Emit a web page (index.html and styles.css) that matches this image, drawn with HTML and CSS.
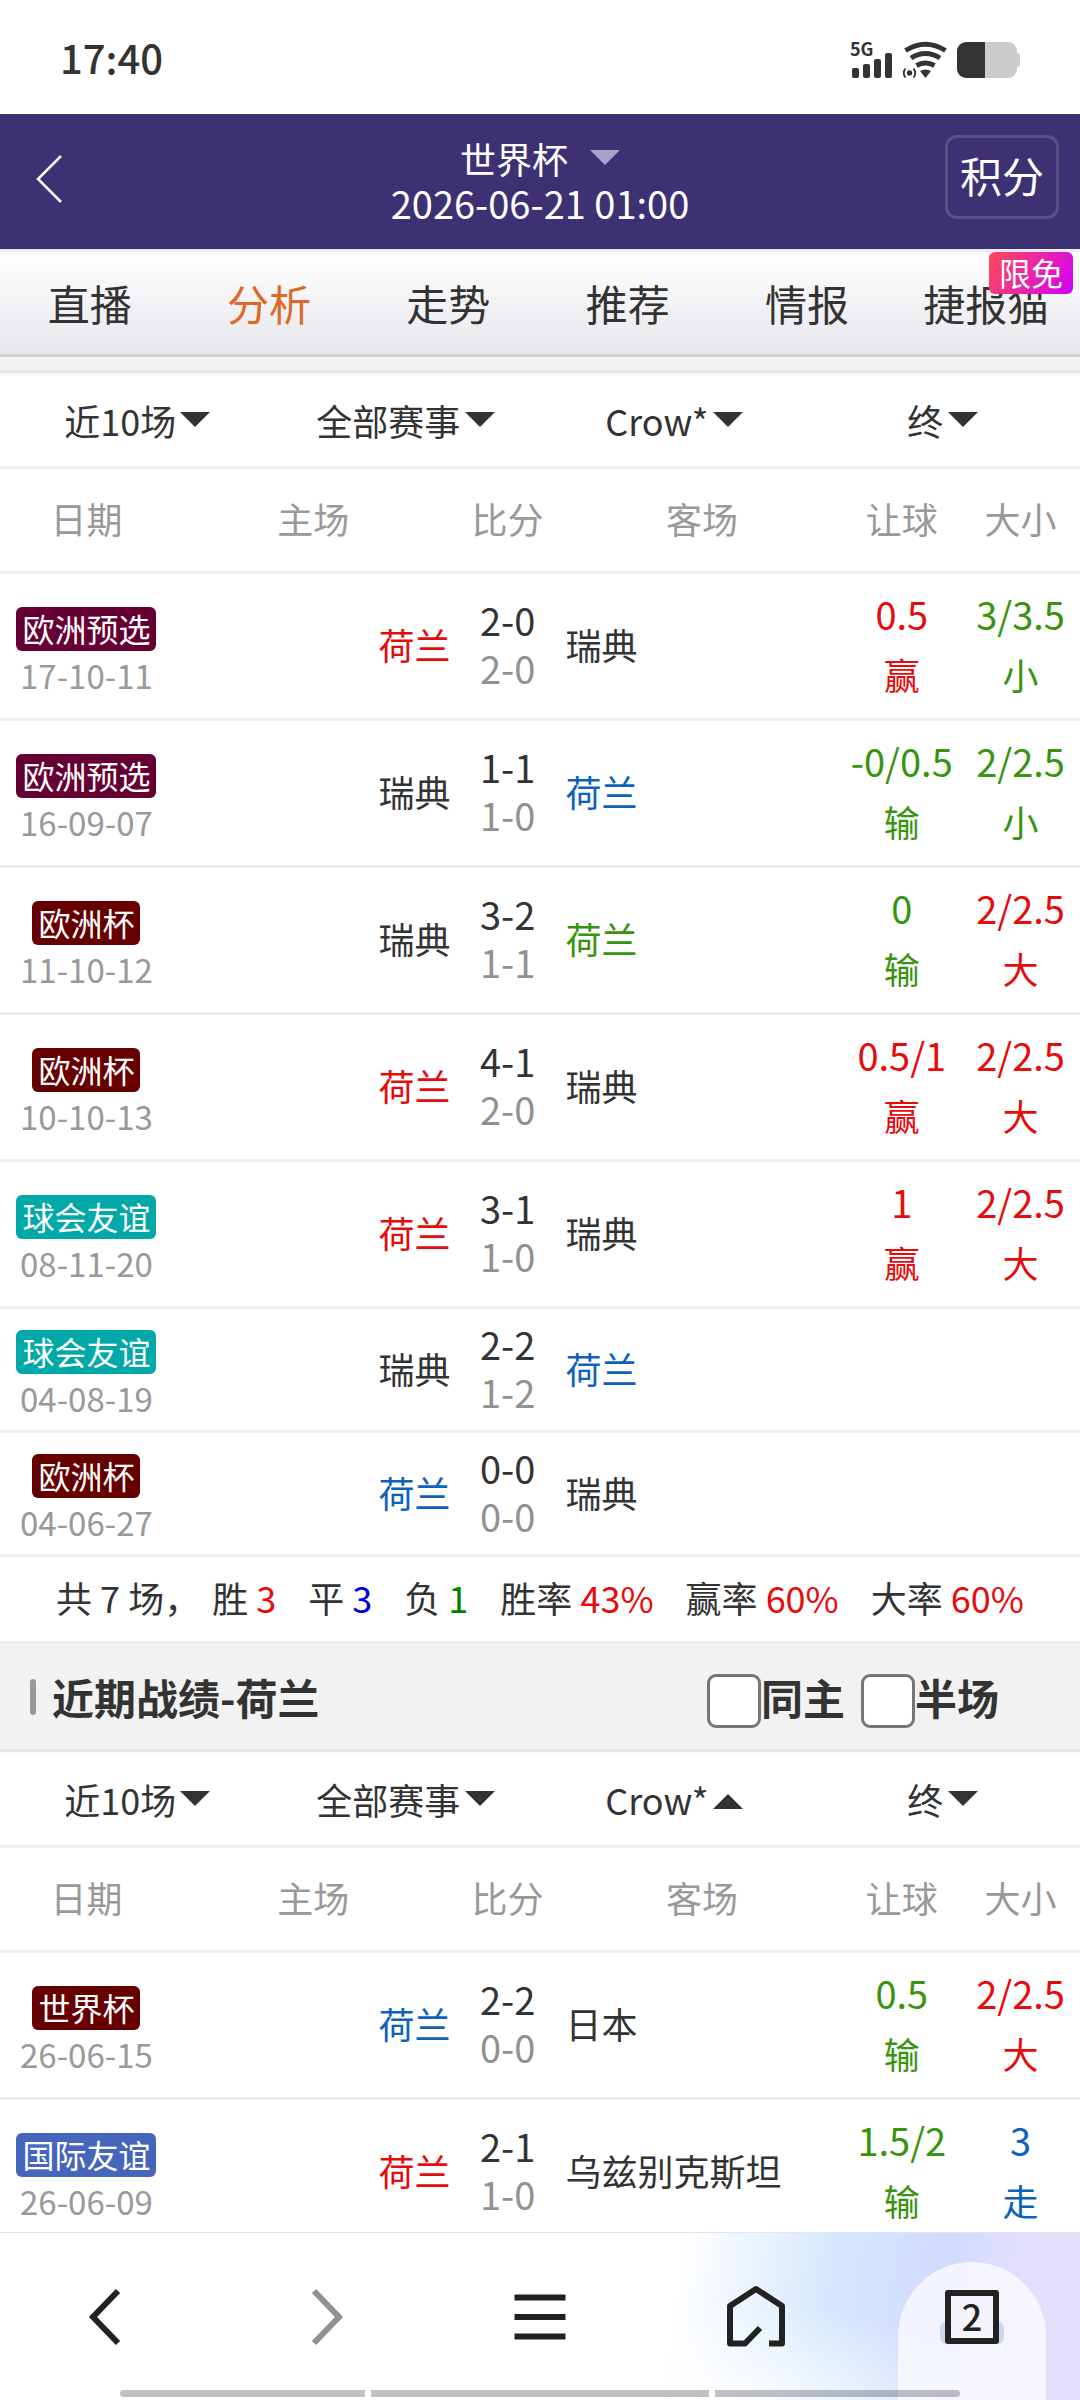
FILE: index.html
```html
<!DOCTYPE html>
<html lang="zh-CN">

<head>
	<meta charset="UTF-8">
	<meta name="viewport" content="width=device-width, initial-scale=1.0">
	<title>世界杯 分析</title>
	<link rel="stylesheet" href="styles.css">
</head>

<body>
	<!-- 状态栏 -->
	<div class="status">
		<span class="clock">17:40</span>
		<div class="status-icons">
			<svg width="43" height="48" viewBox="0 -12 43 48" fill="#333">
				<text class="net" x="0" y="14">5G</text>
				<rect x="2" y="26" width="7" height="10" rx="2"/>
				<rect x="13" y="22" width="7" height="14" rx="2"/>
				<rect x="24" y="17" width="7" height="19" rx="2"/>
				<rect x="35" y="11" width="7" height="25" rx="2"/>
			</svg>
			<svg width="46" height="38" viewBox="0 0 46 38" fill="none" stroke="#333" stroke-width="5">
				<path d="M3.500 10.500Q23.500 -2 43.500 10.500"/>
				<path d="M9 18Q23.500 9 38 18"/>
				<path d="M14.500 25.500Q23.500 20.500 32.500 25.500"/>
				<path d="M18 31Q23.500 28 29 31L23.500 38z" fill="#333" stroke="none"/>
				<circle cx="7.500" cy="33" r="2.700" fill="#333" stroke="none"/>
				<path d="M3.500 28.500Q0 33 3.500 37.500M11.500 28.500Q15 33 11.500 37.500" stroke-width="1.800"/>
			</svg>
			<svg width="63" height="36" viewBox="0 0 63 36">
				<path d="M28 0H51a9 9 0 0 1 9 9V11a3 3 0 0 1 3 3V22a3 3 0 0 1-3 3V27a9 9 0 0 1-9 9H28z" fill="#ccc"/>
				<path d="M28 0H9a9 9 0 0 0-9 9V27a9 9 0 0 0 9 9H28z" fill="#333"/>
			</svg>
		</div>
	</div>

	<!-- 头部 -->
	<header class="header">
		<a href="#" class="back" aria-label="返回">
			<svg width="27" height="48" viewBox="0 0 27 48" fill="none" stroke="#fff" stroke-width="2.500"><path d="M25 1L2 24L25 47"/></svg>
		</a>
		<div class="match">
			<label class="league">
				<select aria-label="赛事"><option>世界杯</option></select>
				<i class="arrow"></i>
			</label>
			<div class="kickoff">2026-06-21 01:00</div>
		</div>
		<button class="points">积分</button>
	</header>

	<nav class="tabs">
		<a href="#">直播</a>
		<a href="#" class="on">分析</a>
		<a href="#">走势</a>
		<a href="#">推荐</a>
		<a href="#">情报</a>
		<a href="#">捷报猫<span class="free">限免</span></a>
	</nav>

	<main class="content">
		<!-- 对赛往绩 -->
		<section>
			<div class="section-end"></div>
			<div class="filters">
				<label><select aria-label="场数"><option>近10场</option></select><i class="arrow"></i></label>
				<label><select aria-label="赛事"><option>全部赛事</option></select><i class="arrow"></i></label>
				<label><select aria-label="公司"><option>Crow*</option></select><i class="arrow"></i></label>
				<label><select aria-label="盘口"><option>终</option></select><i class="arrow"></i></label>
			</div>
			<table class="games">
				<thead>
					<tr>
						<th class="c-date">日期</th>
						<th class="c-team">主场</th>
						<th class="c-score">比分</th>
						<th class="c-team">客场</th>
						<th class="c-odds">让球</th>
						<th class="c-odds">大小</th>
					</tr>
				</thead>
				<tbody>
					<tr>
						<td class="date"><span class="cup euq">欧洲预选</span><time>17-10-11</time></td>
						<td class="home red">荷兰</td>
						<td class="score">2-0<span>2-0</span></td>
						<td class="away">瑞典</td>
						<td class="odds red">0.5<span>赢</span></td>
						<td class="odds green">3/3.5<span>小</span></td>
					</tr>
					<tr>
						<td class="date"><span class="cup euq">欧洲预选</span><time>16-09-07</time></td>
						<td class="home">瑞典</td>
						<td class="score">1-1<span>1-0</span></td>
						<td class="away blue">荷兰</td>
						<td class="odds green">-0/0.5<span>输</span></td>
						<td class="odds green">2/2.5<span>小</span></td>
					</tr>
					<tr>
						<td class="date"><span class="cup euro">欧洲杯</span><time>11-10-12</time></td>
						<td class="home">瑞典</td>
						<td class="score">3-2<span>1-1</span></td>
						<td class="away green">荷兰</td>
						<td class="odds green">0<span>输</span></td>
						<td class="odds red">2/2.5<span>大</span></td>
					</tr>
					<tr>
						<td class="date"><span class="cup euro">欧洲杯</span><time>10-10-13</time></td>
						<td class="home red">荷兰</td>
						<td class="score">4-1<span>2-0</span></td>
						<td class="away">瑞典</td>
						<td class="odds red">0.5/1<span>赢</span></td>
						<td class="odds red">2/2.5<span>大</span></td>
					</tr>
					<tr>
						<td class="date"><span class="cup club">球会友谊</span><time>08-11-20</time></td>
						<td class="home red">荷兰</td>
						<td class="score">3-1<span>1-0</span></td>
						<td class="away">瑞典</td>
						<td class="odds red">1<span>赢</span></td>
						<td class="odds red">2/2.5<span>大</span></td>
					</tr>
					<tr>
						<td class="date"><span class="cup club">球会友谊</span><time>04-08-19</time></td>
						<td class="home">瑞典</td>
						<td class="score">2-2<span>1-2</span></td>
						<td class="away blue">荷兰</td>
						<td></td>
						<td></td>
					</tr>
					<tr>
						<td class="date"><span class="cup euro">欧洲杯</span><time>04-06-27</time></td>
						<td class="home blue">荷兰</td>
						<td class="score">0-0<span>0-0</span></td>
						<td class="away">瑞典</td>
						<td></td>
						<td></td>
					</tr>
				</tbody>
			</table>
			<div class="total">
				<span>共 7 场，</span>
				<span>胜 <b class="t-red">3</b></span>
				<span>平 <b class="t-blue">3</b></span>
				<span>负 <b class="t-green">1</b></span>
				<span>胜率 <b class="t-red">43%</b></span>
				<span>赢率 <b class="t-red">60%</b></span>
				<span>大率 <b class="t-red">60%</b></span>
			</div>
		</section>

		<!-- 近期战绩 -->
		<section>
			<div class="section-title">
				<h2>近期战绩-荷兰</h2>
				<label><input type="checkbox">同主</label>
				<label><input type="checkbox">半场</label>
			</div>
			<div class="filters">
				<label><select aria-label="场数"><option>近10场</option></select><i class="arrow"></i></label>
				<label><select aria-label="赛事"><option>全部赛事</option></select><i class="arrow"></i></label>
				<label><select aria-label="公司"><option>Crow*</option></select><i class="arrow up"></i></label>
				<label><select aria-label="盘口"><option>终</option></select><i class="arrow"></i></label>
			</div>
			<table class="games">
				<thead>
					<tr>
						<th class="c-date">日期</th>
						<th class="c-team">主场</th>
						<th class="c-score">比分</th>
						<th class="c-team">客场</th>
						<th class="c-odds">让球</th>
						<th class="c-odds">大小</th>
					</tr>
				</thead>
				<tbody>
					<tr>
						<td class="date"><span class="cup world">世界杯</span><time>26-06-15</time></td>
						<td class="home blue">荷兰</td>
						<td class="score">2-2<span>0-0</span></td>
						<td class="away">日本</td>
						<td class="odds green">0.5<span>输</span></td>
						<td class="odds red">2/2.5<span>大</span></td>
					</tr>
					<tr>
						<td class="date"><span class="cup nation">国际友谊</span><time>26-06-09</time></td>
						<td class="home red">荷兰</td>
						<td class="score">2-1<span>1-0</span></td>
						<td class="away">乌兹别克斯坦</td>
						<td class="odds green">1.5/2<span>输</span></td>
						<td class="odds blue">3<span>走</span></td>
					</tr>
				</tbody>
			</table>
		</section>
	</main>

	<!-- 浏览器底栏 -->
	<footer class="toolbar">
		<button aria-label="后退">
			<svg width="64" height="64" viewBox="0 0 64 64" fill="none" stroke="#222" stroke-width="6"><path d="M42 6L17 32L42 58"/></svg>
		</button>
		<button aria-label="前进">
			<svg width="64" height="64" viewBox="0 0 64 64" fill="none" stroke="#919191" stroke-width="6"><path d="M22 6L47 32L22 58"/></svg>
		</button>
		<button aria-label="菜单">
			<svg width="64" height="64" viewBox="0 0 64 64" fill="none" stroke="#222" stroke-width="6"><path d="M6.500 12.500H57.500M6.500 32H57.500M6.500 51.500H57.500"/></svg>
		</button>
		<button aria-label="主页">
			<svg width="64" height="64" viewBox="0 0 64 64" fill="none" stroke="#222" stroke-width="6" stroke-linejoin="round"><path d="M45 58.500H58V21L32 4L6 21V58.500H21L36 43"/></svg>
		</button>
		<button class="pages" aria-label="窗口"><span>2</span></button>
		<div class="swipe"><i></i><i class="mid"></i><i></i></div>
	</footer>
</body>

</html>
```
FILE: styles.css
```css
* {
	box-sizing: border-box;
}

body {
	margin: 0;
	height: 100vh;
	display: flex;
	flex-direction: column;
	background: #fff;
	color: #333;
	font-family: "Noto Sans CJK SC", sans-serif;
	font-size: 36px;
	line-height: 48px;
}

a {
	color: inherit;
	text-decoration: none;
}

button, select, input {
	margin: 0;
	padding: 0;
	border: none;
	background: none;
	color: inherit;
	font: inherit;
}

select {
	appearance: none;
	height: 48px;
}

svg {
	display: block;
}

/* 状态栏 */
.status {
	flex: none;
	height: 114px;
	padding: 0 60px 36px;
	display: flex;
	justify-content: space-between;
	align-items: flex-end;
}

.clock {
	font-size: 40px;
	font-weight: 500;
	line-height: 42px;
}

.status-icons {
	display: flex;
	align-items: flex-end;
	gap: 9px;
}

.net {
	font-size: 18px;
	font-weight: bold;
}

/* 头部 */
.header {
	flex: none;
	height: 135px;
	padding: 0 21px 6px 36px;
	display: flex;
	justify-content: space-between;
	align-items: center;
	background: #3d3174;
	color: #fff;
}

.back {
	width: 99px;
}

.match {
	text-align: center;
}

.league {
	display: flex;
	justify-content: center;
	align-items: center;
	gap: 21px;
	color: #fff;
}

.league .arrow {
	color: #aaa2cc;
}

.kickoff {
	font-size: 38px;
	line-height: 42px;
}

.points {
	width: 114px;
	height: 84px;
	margin-bottom: 3px;
	padding-bottom: 4px;
	border: 3px solid #5a5083;
	border-radius: 12px;
	font-size: 42px;
}

/* 三角箭头 */
.arrow {
	border: 15px solid transparent;
	border-top-color: currentColor;
	border-bottom: none;
}

.arrow.up {
	margin-top: 6px;
	border-top: none;
	border-bottom: 15px solid currentColor;
}

/* 导航 */
.tabs {
	flex: none;
	padding-right: 4px;
	display: flex;
	border-top: 3px solid #eeebf8;
	border-bottom: 3px solid #d1d1d6;
	background: linear-gradient(#fff, #e7e6ec);
}

.tabs a {
	position: relative;
	flex: 1;
	height: 102px;
	font-size: 42px;
	line-height: 102px;
	text-align: center;
}

.tabs .on {
	color: #df6827;
}

.free {
	position: absolute;
	top: 0;
	right: 3px;
	padding: 0 10px 2px;
	border-radius: 6px;
	background: linear-gradient(120deg, #ff4b55, #d400fb);
	color: #fff;
	font-size: 32px;
	line-height: 40px;
}

/* 内容 */
.content {
	flex: 1;
	min-height: 0;
	overflow: hidden;
}

.section-end {
	height: 13px;
	background: #f2f2f2;
}

.filters {
	height: 99px;
	padding: 0 3px;
	display: flex;
	align-items: center;
	border-top: 3px solid #e4e4e4;
	border-bottom: 3px solid #eee;
	box-shadow: inset 0 3px #f9f9f9;
}

.filters label {
	flex: 1;
	display: flex;
	justify-content: center;
	align-items: center;
	gap: 4px;
}

.filters select {
	padding-bottom: 2px;
}

.games {
	width: 100%;
	table-layout: fixed;
	border-spacing: 0;
	text-align: center;
}

.games th {
	height: 105px;
	padding: 0 0 4px;
	border-bottom: 3px solid #eee;
	color: #999;
	font-weight: normal;
}

.c-date {
	width: 16%;
}

.c-team {
	width: 26%;
}

.c-score {
	width: 10%;
}

.c-odds {
	width: 11%;
}

.games td {
	padding: 10px 0 14px;
	border-bottom: 3px solid #eee;
}

.games .date {
	padding: 21px 0 8px;
	color: #999;
	font-size: 32px;
}

.cup {
	display: block;
	width: fit-content;
	margin: 0 auto;
	padding: 0 6px 2px;
	border-radius: 6px;
	color: #fff;
	line-height: 42px;
}

.date time {
	display: block;
	font-size: 33px;
	line-height: 48px;
}

.euq {
	background: #660033;
}

.euro, .world {
	background: #660000;
}

.club {
	background: #00a8a8;
}

.nation {
	background: #4666bb;
}

.games .home {
	padding-right: 3px;
	text-align: right;
}

.games .away {
	padding-left: 4px;
	text-align: left;
	white-space: nowrap;
}

.score {
	font-size: 38px;
}

.score span {
	display: block;
	color: #919191;
}

.odds {
	font-size: 38px;
	line-height: 60px;
	white-space: nowrap;
}

.odds span {
	display: block;
	font-size: 36px;
}

.red {
	color: #e60c0c;
}

.green {
	color: #38940f;
}

.blue {
	color: #0c63bd;
}

/* 统计 */
.total {
	height: 84px;
	padding-bottom: 4px;
	display: flex;
	justify-content: center;
	align-items: center;
	gap: 32px;
	white-space: nowrap;
}

.total span:first-child {
	margin-right: -20px;
}

.total b {
	font-weight: normal;
}

.t-red {
	color: #e60c0c;
}

.t-blue {
	color: #0000e0;
}

.t-green {
	color: #008000;
}

.section-title {
	height: 108px;
	padding: 0 81px 0 30px;
	display: flex;
	align-items: center;
	gap: 16px;
	border-top: 3px solid #eee;
	background: #f2f2f2;
	font-size: 42px;
	font-weight: bold;
}

.section-title h2 {
	flex: 1;
	margin: 0;
	display: flex;
	align-items: center;
	gap: 16px;
	font-size: 42px;
}

.section-title h2::before {
	content: "";
	width: 6px;
	height: 36px;
	border-radius: 3px;
	background: #999;
}

.section-title label {
	display: flex;
	align-items: center;
}

.section-title input {
	appearance: none;
	width: 54px;
	height: 54px;
	margin-top: 8px;
	border: 3px solid #767676;
	border-radius: 9px;
	background: #fff;
}

/* 底栏 */
.toolbar {
	position: relative;
	flex: none;
	height: 168px;
	display: flex;
	align-items: center;
	border-top: 1px solid #e5e5e5;
	background:
		radial-gradient(ellipse 26% 70% at 67% 110%, #fff, transparent),
		linear-gradient(98deg, #fff 62%, #d5e7ff 76%, #d2daff 86%, #e5dffe 94%);
}

.toolbar button {
	flex: 1;
	height: 100%;
	display: flex;
	justify-content: center;
	align-items: center;
}

.toolbar .pages {
	position: relative;
}

.pages::before {
	content: "";
	position: absolute;
	top: 29px;
	bottom: 0;
	left: 50%;
	width: 148px;
	margin-left: -74px;
	border-radius: 74px 74px 0 0;
	background: rgba(255, 255, 255, .7);
}

.pages::after {
	content: "";
	position: absolute;
	top: 89px;
	left: 50%;
	width: 64px;
	height: 22px;
	margin-left: -32px;
	border-radius: 6px;
	background: #c9d9f1;
}

.pages span {
	position: relative;
	z-index: 1;
	width: 54px;
	height: 54px;
	border: 6px solid #222;
	border-radius: 3px;
	background: #f5f4fe;
	color: #222;
	font-weight: 500;
	line-height: 38px;
}

.swipe {
	position: absolute;
	left: 0;
	right: 0;
	bottom: 3px;
	padding: 0 120px;
	display: flex;
	gap: 6px;
}

.swipe i {
	flex: 245;
	height: 7px;
	background: rgba(0, 0, 0, .24);
}

.swipe .mid {
	flex: 338;
}

.swipe i:first-child {
	border-radius: 4px 0 0 4px;
}

.swipe i:last-child {
	border-radius: 0 4px 4px 0;
}
```
